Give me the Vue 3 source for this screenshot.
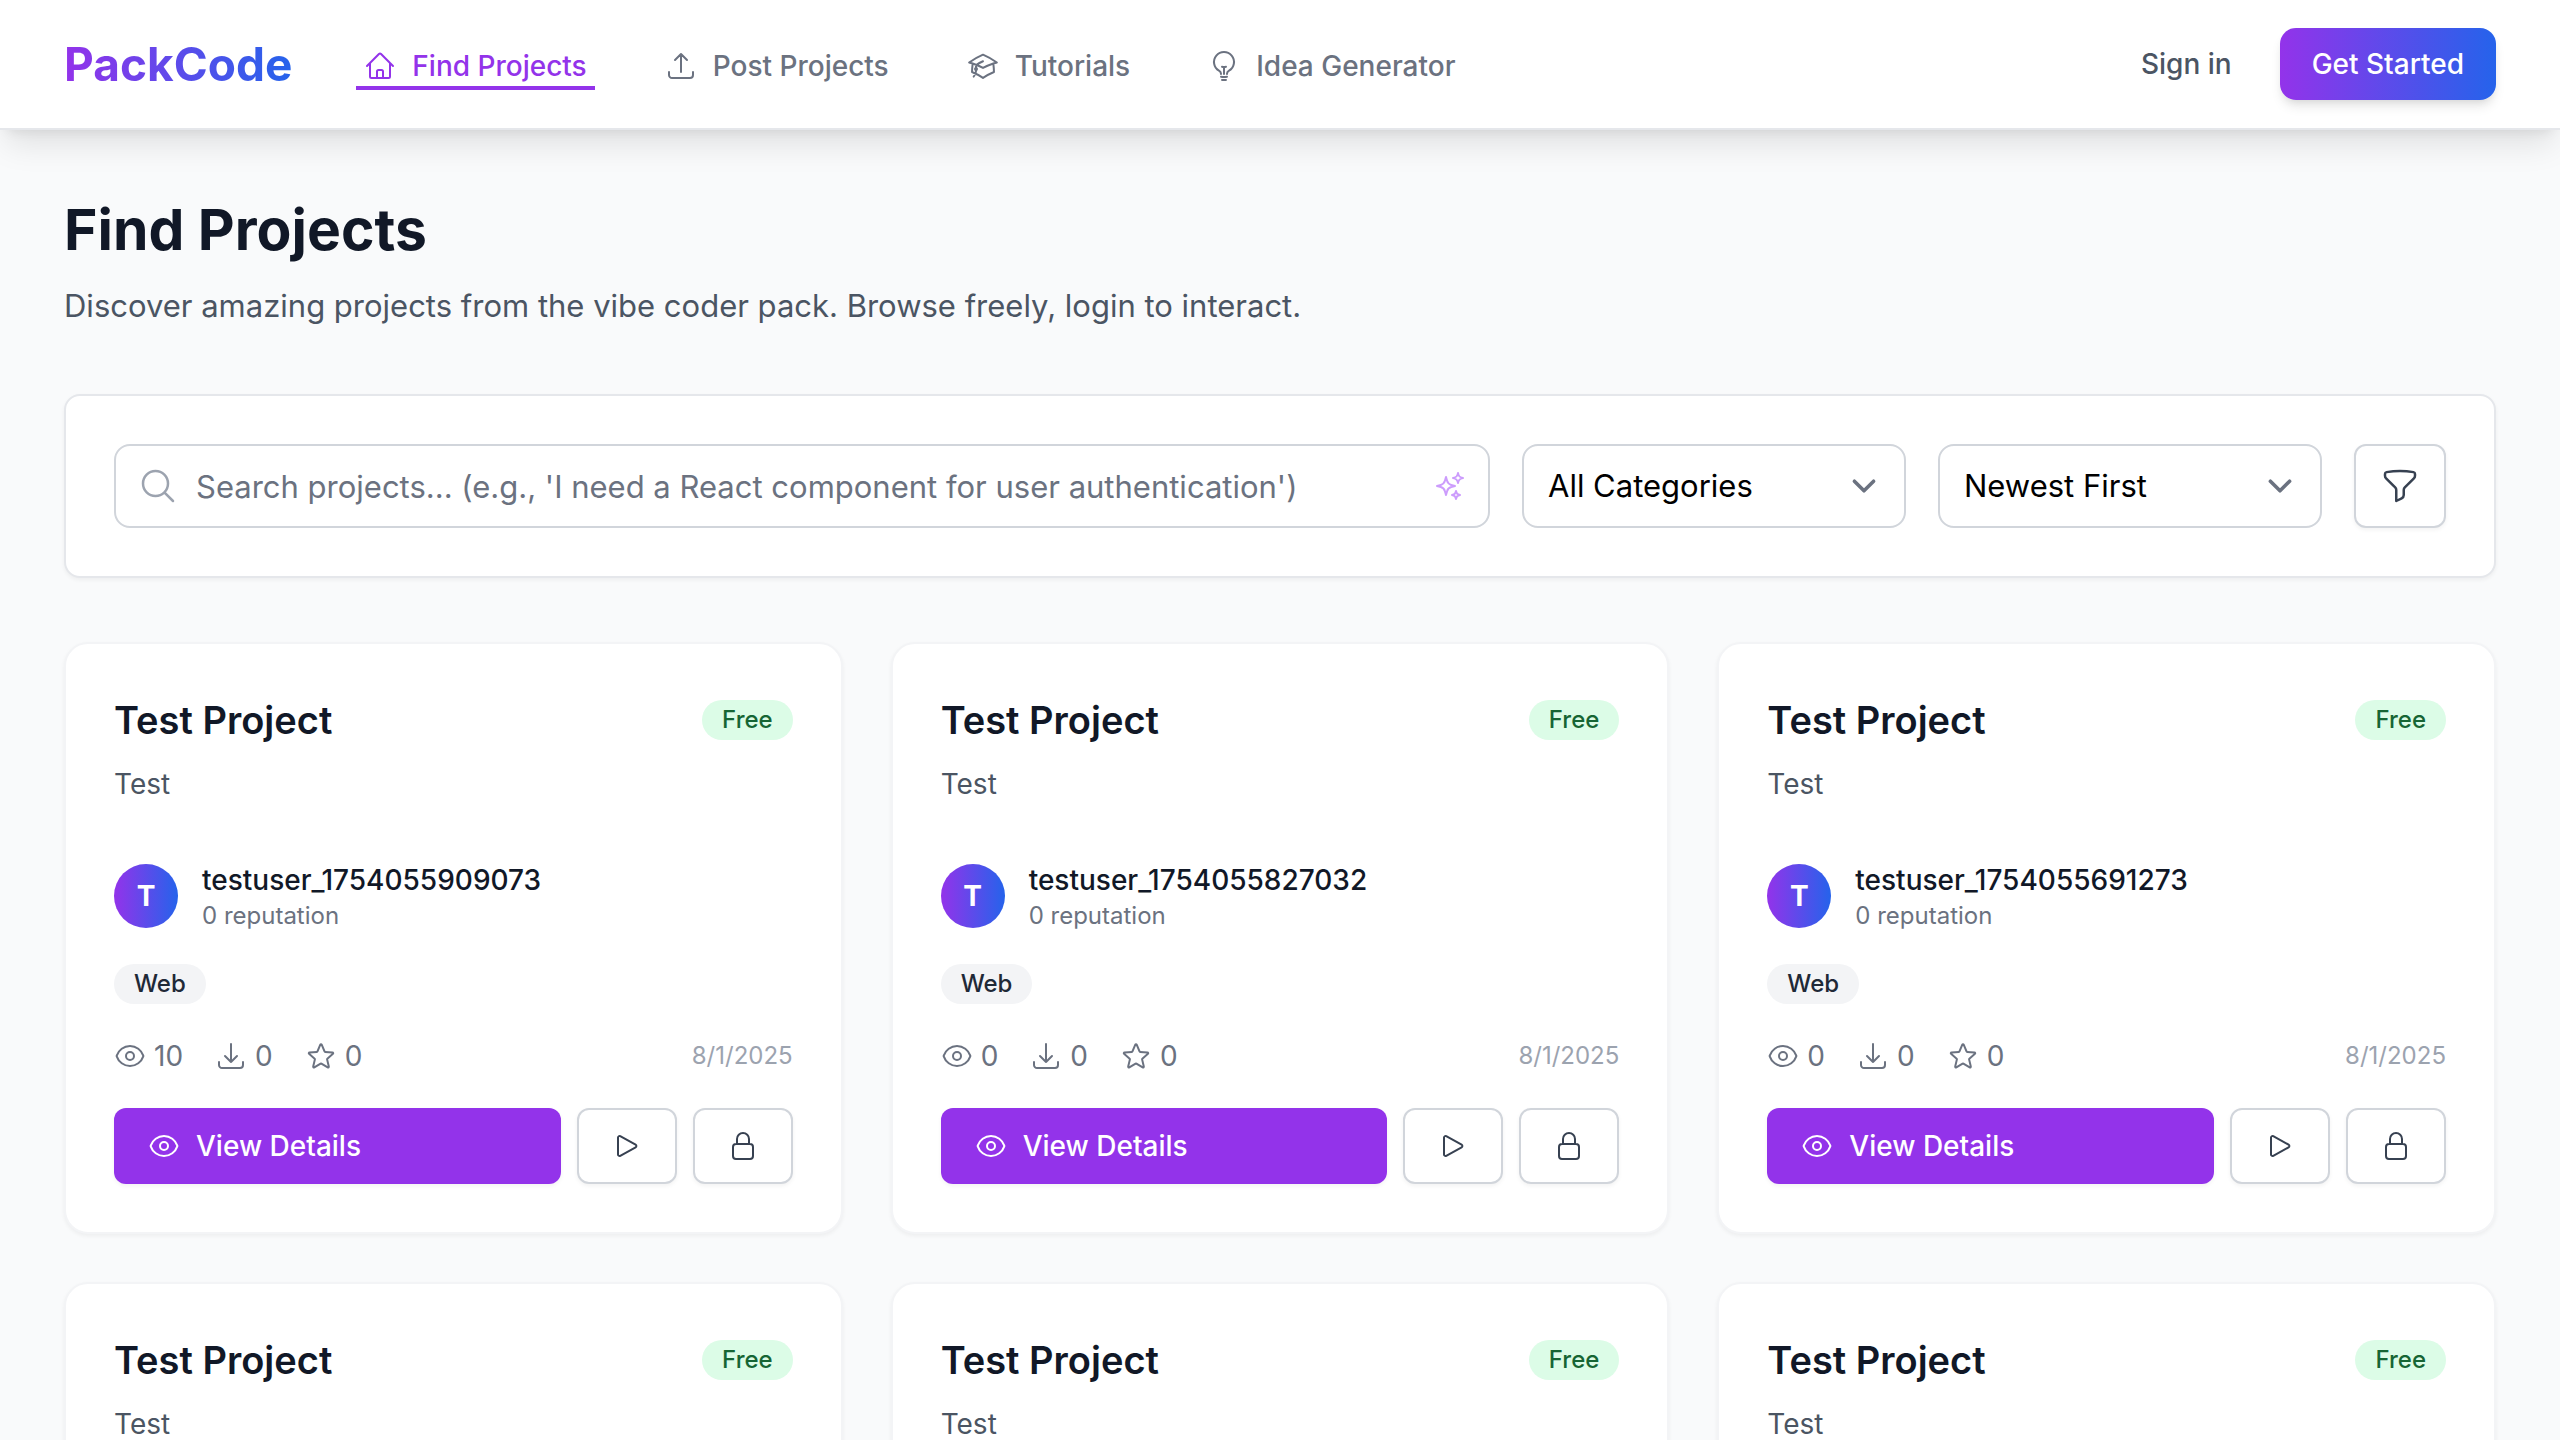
<script setup>
import { ref, h } from 'vue'

const icons = {
  home: ['m2.25 12 8.954-8.955c.44-.439 1.152-.439 1.591 0L21.75 12M4.5 9.75v10.125c0 .621.504 1.125 1.125 1.125H9.75v-4.875c0-.621.504-1.125 1.125-1.125h2.25c.621 0 1.125.504 1.125 1.125V21h4.125c.621 0 1.125-.504 1.125-1.125V9.75M8.25 21h8.25'],
  upload: ['M3 16.5v2.25A2.25 2.25 0 0 0 5.25 21h13.5A2.25 2.25 0 0 0 21 18.75V16.5m-13.5-9L12 3m0 0 4.5 4.5M12 3v13.5'],
  download: ['M3 16.5v2.25A2.25 2.25 0 0 0 5.25 21h13.5A2.25 2.25 0 0 0 21 18.75V16.5M16.5 12 12 16.5m0 0L7.5 12m4.5 4.5V3'],
  academic: ['M4.26 10.147a60.438 60.438 0 0 0-.491 6.347A48.62 48.62 0 0 1 12 20.904a48.62 48.62 0 0 1 8.232-4.41 60.46 60.46 0 0 0-.491-6.347m-15.482 0a50.636 50.636 0 0 0-2.658-.813A59.906 59.906 0 0 1 12 3.493a59.903 59.903 0 0 1 10.399 5.84c-.896.248-1.783.52-2.658.814m-15.482 0A50.717 50.717 0 0 1 12 13.489a50.702 50.702 0 0 1 7.74-3.342M6.75 15a.75.75 0 1 0 0-1.5.75.75 0 0 0 0 1.5Zm0 0v-3.675A55.378 55.378 0 0 1 12 8.443m-7.007 11.55A5.981 5.981 0 0 0 6.75 15.75v-1.5'],
  bulb: ['M12 18v-5.25m0 0a6.01 6.01 0 0 0 1.5-.189m-1.5.189a6.01 6.01 0 0 1-1.5-.189m3.75 7.478a12.06 12.06 0 0 1-4.5 0m3.75 2.383a14.406 14.406 0 0 1-3 0M14.25 18v-.192c0-.983.658-1.823 1.508-2.316a7.5 7.5 0 1 0-7.517 0c.85.493 1.509 1.333 1.509 2.316V18'],
  search: ['m21 21-5.197-5.197m0 0A7.5 7.5 0 1 0 5.196 5.196a7.5 7.5 0 0 0 10.607 10.607Z'],
  sparkles: ['M9.813 15.904 9 18.75l-.813-2.846a4.5 4.5 0 0 0-3.09-3.09L2.25 12l2.846-.813a4.5 4.5 0 0 0 3.09-3.09L9 5.25l.813 2.846a4.5 4.5 0 0 0 3.09 3.09L15.75 12l-2.846.813a4.5 4.5 0 0 0-3.09 3.09ZM18.259 8.715 18 9.75l-.259-1.035a3.375 3.375 0 0 0-2.455-2.456L14.25 6l1.036-.259a3.375 3.375 0 0 0 2.455-2.456L18 2.25l.259 1.035a3.375 3.375 0 0 0 2.456 2.456L21.75 6l-1.035.259a3.375 3.375 0 0 0-2.456 2.456ZM16.894 20.567 16.5 21.75l-.394-1.183a2.25 2.25 0 0 0-1.423-1.423L13.5 18.75l1.183-.394a2.25 2.25 0 0 0 1.423-1.423l.394-1.183.394 1.183a2.25 2.25 0 0 0 1.423 1.423l1.183.394-1.183.394a2.25 2.25 0 0 0-1.423 1.423Z'],
  funnel: ['M12 3c2.755 0 5.455.232 8.083.678.533.09.917.556.917 1.096v1.044a2.25 2.25 0 0 1-.659 1.591l-5.432 5.432a2.25 2.25 0 0 0-.659 1.591v2.927a2.25 2.25 0 0 1-1.244 2.013L9.75 21v-6.568a2.25 2.25 0 0 0-.659-1.591L3.659 7.409A2.25 2.25 0 0 1 3 5.818V4.774c0-.54.384-1.006.917-1.096A48.32 48.32 0 0 1 12 3Z'],
  eye: [
    'M2.036 12.322a1.012 1.012 0 0 1 0-.639C3.423 7.51 7.36 4.5 12 4.5c4.638 0 8.573 3.007 9.963 7.178.07.207.07.431 0 .639C20.577 16.49 16.64 19.5 12 19.5c-4.638 0-8.573-3.007-9.963-7.178Z',
    'M15 12a3 3 0 1 1-6 0 3 3 0 0 1 6 0Z'
  ],
  star: ['M11.48 3.499a.562.562 0 0 1 1.04 0l2.125 5.111a.563.563 0 0 0 .475.345l5.518.442c.499.04.701.663.321.988l-4.204 3.602a.563.563 0 0 0-.182.557l1.285 5.385a.562.562 0 0 1-.84.61l-4.725-2.885a.562.562 0 0 0-.586 0L6.982 20.54a.562.562 0 0 1-.84-.61l1.285-5.386a.562.562 0 0 0-.182-.557l-4.204-3.602a.562.562 0 0 1 .321-.988l5.518-.442a.563.563 0 0 0 .475-.345L11.48 3.5Z'],
  play: ['M5.25 5.653c0-.856.917-1.398 1.667-.986l11.54 6.347a1.125 1.125 0 0 1 0 1.972l-11.54 6.347a1.125 1.125 0 0 1-1.667-.986V5.653Z'],
  lock: ['M16.5 10.5V6.75a4.5 4.5 0 1 0-9 0v3.75m-.75 11.25h10.5a2.25 2.25 0 0 0 2.25-2.25v-6.75a2.25 2.25 0 0 0-2.25-2.25H6.75a2.25 2.25 0 0 0-2.25 2.25v6.75a2.25 2.25 0 0 0 2.25 2.25Z']
}

const Icon = ({ name, size = 32 }) =>
  h('svg', {
    width: size,
    height: size,
    viewBox: '0 0 24 24',
    fill: 'none',
    stroke: 'currentColor',
    'stroke-width': 1.5,
    'stroke-linecap': 'round',
    'stroke-linejoin': 'round',
    'aria-hidden': 'true'
  }, icons[name].map((d) => h('path', { d })))
Icon.props = ['name', 'size']

const navLinks = [
  { label: 'Find Projects', icon: 'home', active: true },
  { label: 'Post Projects', icon: 'upload' },
  { label: 'Tutorials', icon: 'academic' },
  { label: 'Idea Generator', icon: 'bulb' }
]

const query = ref('')
const filters = [
  { id: 'category', option: 'All Categories' },
  { id: 'sort', option: 'Newest First' }
]

const projects = [
  { author: 'testuser_1754055909073', views: 10 },
  { author: 'testuser_1754055827032', views: 0 },
  { author: 'testuser_1754055691273', views: 0 },
  {},
  {},
  {}
]
</script>

<template>
  <div class="app">
    <header class="topbar">
      <a class="logo" href="#">PackCode</a>
      <nav class="nav">
        <a
          v-for="link in navLinks"
          :key="link.label"
          href="#"
          class="nav-link"
          :class="{ active: link.active }"
        >
          <Icon :name="link.icon" />
          {{ link.label }}
        </a>
      </nav>
      <div class="account">
        <a class="sign-in" href="#">Sign in</a>
        <button class="get-started" type="button">Get Started</button>
      </div>
    </header>

    <main class="content">
      <h1 class="title">Find Projects</h1>
      <p class="subtitle">Discover amazing projects from the vibe coder pack. Browse freely, login to interact.</p>

      <form class="search-panel" @submit.prevent>
        <div class="search-box">
          <Icon class="search-icon" name="search" :size="40" />
          <input
            v-model="query"
            class="search-input"
            type="text"
            aria-label="Search projects"
            placeholder="Search projects... (e.g., 'I need a React component for user authentication')"
          />
          <Icon class="sparkle-icon" name="sparkles" />
        </div>
        <div v-for="filter in filters" :key="filter.id" class="select-box">
          <select class="select" :aria-label="filter.id">
            <option>{{ filter.option }}</option>
          </select>
          <svg class="chevron" width="48" height="48" viewBox="0 0 20 20" aria-hidden="true">
            <path d="m6 8 4 4 4-4" />
          </svg>
        </div>
        <button class="outline-button filter-button" type="button" aria-label="Filters">
          <Icon name="funnel" :size="40" />
        </button>
      </form>

      <section class="grid">
        <article v-for="(project, i) in projects" :key="i" class="card">
          <div class="card-head">
            <h2 class="card-title">Test Project</h2>
            <span class="badge free">Free</span>
          </div>
          <p class="description">Test</p>

          <template v-if="project.author">
            <div class="author">
              <span class="avatar">T</span>
              <div>
                <div class="author-name">{{ project.author }}</div>
                <div class="reputation">0 reputation</div>
              </div>
            </div>
            <div class="tags"><span class="badge">Web</span></div>
            <div class="stats">
              <span class="stat"><Icon name="eye" />{{ project.views }}</span>
              <span class="stat"><Icon name="download" />0</span>
              <span class="stat"><Icon name="star" />0</span>
              <time class="date" datetime="2025-08-01">8/1/2025</time>
            </div>
            <div class="actions">
              <button class="view-button" type="button"><Icon name="eye" />View Details</button>
              <button class="outline-button" type="button" aria-label="Preview"><Icon name="play" /></button>
              <button class="outline-button" type="button" aria-label="Locked"><Icon name="lock" /></button>
            </div>
          </template>
        </article>
      </section>
    </main>
  </div>
</template>

<style>
body {
  margin: 0;
  background: #f9fafb;
}
</style>

<style scoped>
.app {
  display: flex;
  flex-direction: column;
  height: 100vh;
  overflow: hidden;
  background: #f9fafb;
  color: #111827;
  font-family: Inter, "Liberation Sans", sans-serif;
  font-size: 28px;
  line-height: 40px;
}

.app *,
.app *::before {
  box-sizing: border-box;
}

svg {
  display: block;
  flex: none;
}

a {
  color: inherit;
  text-decoration: none;
}

h1,
h2,
p {
  margin: 0;
}

button,
input,
select {
  margin: 0;
  font: inherit;
}

.topbar {
  position: relative;
  z-index: 1;
  flex: none;
  display: flex;
  align-items: center;
  padding: 28px 64px;
  background: #fff;
  border-bottom: 2px solid #e5e7eb;
  box-shadow: 0 20px 30px -6px rgba(0, 0, 0, 0.1), 0 8px 12px -8px rgba(0, 0, 0, 0.1);
}

.logo {
  font-size: 46px;
  font-weight: 700;
  line-height: 64px;
  background: linear-gradient(to right, #9333ea, #2563eb);
  -webkit-background-clip: text;
  background-clip: text;
  color: transparent;
}

.nav {
  display: flex;
  gap: 62px;
  margin-left: 64px;
}

.nav-link {
  display: flex;
  align-items: center;
  gap: 16px;
  padding: 8px 8px 0;
  border-bottom: 4px solid transparent;
  color: #6b7280;
  font-weight: 500;
}

.nav-link.active {
  color: #9333ea;
  border-color: #9333ea;
}

.account {
  display: flex;
  align-items: center;
  gap: 48px;
  margin-left: auto;
  font-weight: 500;
}

.sign-in {
  color: #4b5563;
}

.get-started {
  padding: 16px 32px;
  border: 0;
  border-radius: 16px;
  background: linear-gradient(to right, #9333ea, #2563eb);
  box-shadow: 0 8px 12px -2px rgba(0, 0, 0, 0.1), 0 4px 8px -4px rgba(0, 0, 0, 0.1);
  color: #fff;
}

.content {
  flex: 1;
  min-height: 0;
  padding: 64px 64px 0;
}

.title {
  font-size: 57px;
  font-weight: 700;
  line-height: 72px;
}

.subtitle {
  margin-top: 16px;
  color: #4b5563;
  font-size: 31px;
  line-height: 48px;
}

.search-panel {
  display: flex;
  gap: 32px;
  margin: 64px 0;
  padding: 48px;
  border: 2px solid #e5e7eb;
  border-radius: 16px;
  background: #fff;
  box-shadow: 0 2px 4px rgba(0, 0, 0, 0.05);
  font-size: 31px;
  line-height: 48px;
}

.search-box,
.select-box {
  position: relative;
}

.search-box {
  flex: 1;
}

.select-box {
  width: 384px;
}

.search-input,
.select {
  display: block;
  width: 100%;
  height: 84px;
  border: 2px solid #d1d5db;
  border-radius: 16px;
  background: #fff;
  color: #000;
  outline: 0;
}

.search-input {
  padding: 16px 80px;
}

.search-input::placeholder {
  color: #6b7280;
  opacity: 1;
}

.select {
  padding: 16px 24px;
  appearance: none;
}

.search-icon,
.sparkle-icon,
.chevron {
  position: absolute;
  top: 0;
  bottom: 0;
  margin: auto 0;
  pointer-events: none;
}

.search-icon {
  left: 24px;
  color: #9ca3af;
}

.sparkle-icon {
  right: 24px;
  color: #c084fc;
  opacity: 0.8;
}

.chevron {
  right: 18px;
  fill: none;
  stroke: #6b7280;
  stroke-width: 1.5;
  stroke-linecap: round;
  stroke-linejoin: round;
}

.outline-button {
  display: flex;
  align-items: center;
  justify-content: center;
  width: 100px;
  padding: 0;
  border: 2px solid #d1d5db;
  border-radius: 12px;
  background: #fff;
  box-shadow: 0 2px 4px rgba(0, 0, 0, 0.05);
  color: #374151;
}

.filter-button {
  width: 92px;
}

.grid {
  display: grid;
  grid-template-columns: repeat(3, 1fr);
  grid-auto-rows: 1fr;
  gap: 48px;
}

.card {
  padding: 48px;
  border: 2px solid #f3f4f6;
  border-radius: 24px;
  background: #fff;
  box-shadow: 0 2px 4px rgba(0, 0, 0, 0.05);
}

.card-head {
  display: flex;
  align-items: center;
  justify-content: space-between;
}

.card-title {
  font-size: 38px;
  font-weight: 600;
  line-height: 56px;
}

.badge {
  padding: 4px 20px;
  border-radius: 20px;
  background: #f3f4f6;
  color: #1f2937;
  font-size: 24px;
  font-weight: 500;
  line-height: 32px;
}

.badge.free {
  background: #dcfce7;
  color: #166534;
}

.description {
  margin-top: 16px;
  color: #4b5563;
}

.author {
  display: flex;
  align-items: center;
  gap: 24px;
  margin-top: 56px;
}

.avatar {
  width: 64px;
  height: 64px;
  border-radius: 50%;
  background: linear-gradient(to right, #9333ea, #2563eb);
  color: #fff;
  font-weight: 700;
  line-height: 64px;
  text-align: center;
}

.author-name {
  font-weight: 500;
}

.reputation {
  color: #6b7280;
  font-size: 24px;
  line-height: 32px;
}

.tags {
  display: flex;
  margin: 32px 0;
}

.stats {
  display: flex;
  align-items: center;
  gap: 32px;
  color: #6b7280;
}

.stat {
  display: flex;
  align-items: center;
  gap: 8px;
}

.date {
  margin-left: auto;
  color: #9ca3af;
  font-size: 24px;
}

.actions {
  display: flex;
  gap: 16px;
  margin-top: 32px;
}

.view-button {
  flex: 1;
  display: flex;
  align-items: center;
  gap: 16px;
  padding: 18px 34px;
  border: 0;
  border-radius: 12px;
  background: #9333ea;
  box-shadow: 0 2px 4px rgba(0, 0, 0, 0.05);
  color: #fff;
  font-weight: 500;
}
</style>
